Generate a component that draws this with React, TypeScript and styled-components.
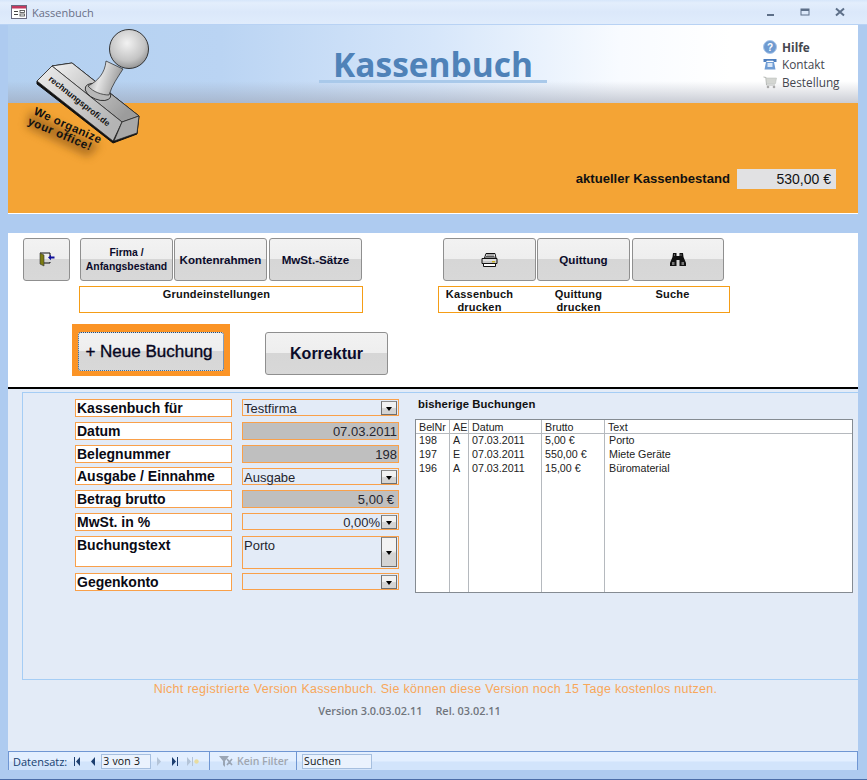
import React from "react";
import styled, { createGlobalStyle } from "styled-components";

const GlobalStyle = createGlobalStyle`
  html, body {
    margin: 0;
    padding: 0;
    background: #aecbf0;
  }
  body {
    font-family: "Liberation Sans", Arial, sans-serif;
  }
`;

const Window = styled.div`
  width: 867px;
  height: 780px;
  display: flex;
  flex-direction: column;
  overflow: hidden;
  background: #aecbf0;
`;

const TitleBar = styled.div`
  height: 25px;
  flex: none;
  display: flex;
  align-items: center;
  padding: 0 22px 0 11px;
  box-sizing: border-box;
  background: linear-gradient(#d6e6fa 0, #e3eefc 12%, #dbe8fa 50%, #e0ecfc 100%);
  border-bottom: 1px solid #b8d2f4;
`;

const TitleText = styled.span`
  font-family: "Open Sans", sans-serif;
  font-size: 11px;
  color: #6a6f86;
  margin-left: 5px;
`;

const WindowButtons = styled.div`
  margin-left: auto;
  display: flex;
  gap: 25px;
  align-items: center;
`;

const Content = styled.div`
  flex: 1;
  display: flex;
  flex-direction: column;
  margin: 0 9px 0 8px;
  min-height: 0;
`;

const Header = styled.header`
  position: relative;
  height: 188px;
  flex: none;
  display: flex;
  flex-direction: column;
  border-bottom: 1px solid #ffffff;
`;

const HeaderSky = styled.div`
  height: 78px;
  flex: none;
  display: flex;
  justify-content: center;
  background:
    linear-gradient(rgba(170, 170, 175, 0) 72%, rgba(150, 155, 170, 0.5) 100%),
    linear-gradient(90deg, #b3d0f0 0, #bad4f3 25%, #d6e6fa 50%, #f8fbff 72%, #ffffff 85%);
`;

const LogoTitle = styled.div`
  margin-top: 19px;
  box-sizing: border-box;
  width: 228px;
  height: 39px;
  padding-left: 14px;
  font-family: "Open Sans", sans-serif;
  font-size: 33.5px;
  line-height: 40px;
  font-weight: 700;
  white-space: nowrap;
  color: #4f82b8;
  border-bottom: 3px solid #a9c9ea;
`;

const HeaderOrange = styled.div`
  flex: 1;
  display: flex;
  justify-content: flex-end;
  align-items: flex-end;
  padding: 0 22px 24px 0;
  background: #f4a435;
`;

const BalanceLabel = styled.span`
  font-size: 13.1px;
  font-weight: 700;
  color: #111;
  line-height: 20px;
  margin-right: 7px;
`;

const BalanceValue = styled.span`
  width: 99px;
  height: 20px;
  box-sizing: border-box;
  padding-right: 5px;
  font-size: 14px;
  line-height: 20px;
  text-align: right;
  color: #111;
  background: #e1e1e3;
`;

const Links = styled.nav`
  position: absolute;
  top: 13px;
  right: 8px;
  width: 87px;
  display: flex;
  flex-direction: column;
`;

const LinkRow = styled.div<{ $bold?: boolean }>`
  display: flex;
  align-items: center;
  gap: 5px;
  height: 17.5px;
  font-family: "Open Sans", sans-serif;
  font-size: 11.8px;
  font-weight: ${(p) => (p.$bold ? 700 : 400)};
  color: #44464e;
  white-space: nowrap;
`;

const LinkIcon = styled.svg`
  width: 14px;
  height: 14px;
  flex: none;
`;

const Stamp = styled.svg`
  position: absolute;
  left: 12px;
  top: 4px;
  width: 130px;
  height: 130px;
  overflow: visible;
  z-index: 2;
`;

const StampPrint = styled.text<{ $spacing?: number }>`
  font-family: "Liberation Sans", sans-serif;
  font-weight: 700;
  fill: #111;
  letter-spacing: ${(p) => p.$spacing ?? 0}px;
`;

const Toolbar = styled.section`
  background: #ffffff;
  height: 156px;
  margin-top: 19px;
  flex: none;
  box-sizing: border-box;
  border-bottom: 2px solid #000;
  display: grid;
  grid-template-columns: 56px 284px 75px 292px;
  grid-template-rows: 43px 27px 1fr;
  padding: 5px 0 0 15px;
  row-gap: 5px;
`;

const ExitSlot = styled.div`
  grid-column: 1;
  grid-row: 1;
`;

const ButtonRow = styled.div<{ $col: number; $inset: number }>`
  grid-column: ${(p) => p.$col};
  grid-row: 1;
  display: flex;
  gap: 1px;
  padding-left: ${(p) => p.$inset}px;
`;

const Btn = styled.button<{ $w: number; $size?: number; $after?: number }>`
  width: ${(p) => p.$w}px;
  height: 43px;
  flex: none;
  padding: 0;
  margin-right: ${(p) => p.$after ?? 0}px;
  box-sizing: border-box;
  border: 1px solid #8f8f8f;
  border-radius: 3px;
  background: linear-gradient(#f2f2f2 0, #eeeeee 48%, #d6d6d6 50%, #d8d8d8 100%);
  font-family: "Liberation Sans", sans-serif;
  font-weight: 700;
  font-size: ${(p) => p.$size ?? 11.6}px;
  line-height: 14px;
  color: #0b0b2a;
  display: flex;
  align-items: center;
  justify-content: center;
  text-align: center;
`;

const CaptionBox = styled.div<{ $col: number }>`
  grid-column: ${(p) => p.$col};
  grid-row: 2;
  box-sizing: border-box;
  border: 1px solid #f59d16;
  font-size: 11px;
  font-weight: 700;
  line-height: 13px;
  color: #111;
  letter-spacing: 0.2px;
  padding-top: 1px;
`;

const GrundCaption = styled(CaptionBox)`
  text-align: center;
  padding-right: 9px;
`;

const DruckCaption = styled(CaptionBox)`
  display: grid;
  grid-template-columns: 81px 117px 71px;
  text-align: center;
`;

const BigRow = styled.div`
  grid-column: 1 / 5;
  grid-row: 3;
  display: flex;
  align-items: flex-start;
  padding-left: 49px;
  margin-top: 6px;
`;

const FocusFrame = styled.div`
  width: 158px;
  height: 52px;
  box-sizing: border-box;
  background: #fb9426;
  padding: 8px 6px;
`;

const NewBtn = styled(Btn)`
  width: 146px;
  height: 39px;
  padding-right: 4px;
  border: 1px dotted #1c4f86;
  font-size: 17px;
  font-weight: 400;
  color: #050520;
  -webkit-text-stroke: 0.35px #050520;
`;

const FixBtn = styled(Btn)`
  margin: 8px 0 0 35px;
  width: 123px;
  height: 43px;
  font-size: 16px;
`;

const FormArea = styled.div`
  flex: 1;
  min-height: 0;
  background: #e3ebf7;
  display: flex;
  flex-direction: column;
  padding: 3px 0 0 14px;
`;

const DetailPanel = styled.section`
  height: 288px;
  flex: none;
  box-sizing: border-box;
  border: 1px solid #a5cdf5;
  border-right: none;
  display: grid;
  grid-template-columns: 340px 1fr;
  padding: 6px 0 0 52px;
`;

const Fields = styled.div`
  display: grid;
  grid-template-columns: 157px 157px;
  column-gap: 10px;
  grid-auto-rows: min-content;
  align-content: start;
`;

const FieldLabel = styled.div<{ $h?: number; $mb?: number }>`
  height: ${(p) => p.$h ?? 18}px;
  margin-bottom: ${(p) => p.$mb ?? 5}px;
  box-sizing: border-box;
  border: 1px solid #f9a04a;
  background: #ffffff;
  padding: 1px 0 0 1px;
  font-size: 14px;
  font-weight: 700;
  line-height: 15px;
  color: #0a0a14;
`;

const FieldValue = styled.div<{ $h?: number; $top?: number; $locked?: boolean; $right?: boolean }>`
  height: ${(p) => p.$h ?? 18}px;
  margin-top: ${(p) => p.$top ?? 0}px;
  box-sizing: border-box;
  border: 1px solid #f9a04a;
  background: ${(p) => (p.$locked ? "#bfbfbf" : "#e3ebf7")};
  display: flex;
  justify-content: ${(p) => (p.$right ? "flex-end" : "flex-start")};
  align-items: flex-start;
  padding: 0 1px 0 1px;
  font-size: 13px;
  line-height: 18px;
  color: #25252d;
`;

const ValueText = styled.span<{ $pad?: number }>`
  flex: 1;
  text-align: ${(p) => (p.$pad !== undefined ? "right" : "left")};
  padding-right: ${(p) => p.$pad ?? 0}px;
`;

const DropButton = styled.span<{ $tall?: boolean }>`
  width: 16px;
  height: ${(p) => (p.$tall ? "30px" : "14px")};
  flex: none;
  margin: ${(p) => (p.$tall ? "0" : "1px 0 0")};
  box-sizing: border-box;
  border: 1px solid #6f6f6f;
  border-top-color: #8a8a8a;
  background: linear-gradient(#f2f2f2 0, #f2f2f2 45%, #d4d4d4 55%);
  display: flex;
  align-items: center;
  justify-content: center;

  &::after {
    content: "";
    border-left: 3.5px solid transparent;
    border-right: 3.5px solid transparent;
    border-top: 4px solid #000;
    margin-top: 2px;
  }
`;

const ListColumn = styled.div`
  display: flex;
  flex-direction: column;
`;

const ListTitle = styled.div`
  font-size: 11.3px;
  font-weight: 700;
  color: #111;
  line-height: 13px;
  margin: -1px 0 8px 3px;
  letter-spacing: 0.1px;
`;

const ListBox = styled.div`
  width: 438px;
  height: 174px;
  box-sizing: border-box;
  border: 1px solid #858b92;
  background: #fff;
  display: grid;
  grid-template-columns: 34px 19px 73px 63px 1fr;
  grid-template-rows: 14px 1fr;
`;

const ListHead = styled.div`
  border-bottom: 1px solid #b5b9be;
  border-right: 1px solid #b5b9be;
  padding-left: 3px;
  font-size: 10.7px;
  line-height: 14px;
  color: #222;
  white-space: nowrap;

  &:nth-child(5) {
    border-right: none;
  }
`;

const ListCol = styled.div`
  border-right: 1px solid #b5b9be;
  padding: 0 0 0 3px;
  font-size: 10.7px;
  line-height: 14px;
  color: #222;
  white-space: nowrap;

  & > div {
    position: relative;
    top: -1px;
  }

  &:last-child {
    border-right: none;
    padding-left: 4px;
  }
`;

const Notice = styled.div`
  margin-top: 2px;
  padding-right: 9px;
  text-align: center;
  font-size: 12.5px;
  line-height: 15px;
  letter-spacing: 0.3px;
  color: #f8a75a;
`;

const VersionLine = styled.div`
  margin-top: 7px;
  padding-right: 61px;
  font-family: "Open Sans", sans-serif;
  font-size: 10.9px;
  font-weight: 600;
  line-height: 13px;
  color: #70757d;
  display: flex;
  justify-content: center;
  gap: 13px;
`;

const StatusBar = styled.footer`
  margin-top: auto;
  margin-left: -14px;
  height: 19px;
  flex: none;
  display: flex;
  align-items: center;
  box-sizing: border-box;
  border-top: 1px solid #6f96d3;
  border-left: 1px solid #6f96d3;
  border-right: 1px solid #6f96d3;
  background: linear-gradient(#e3efff 0, #e3efff 50%, #d2e4fb 55%, #d2e4fb 100%);
  font-family: "Open Sans", sans-serif;
  font-size: 11px;
  color: #15406f;
`;

const StatusCell = styled.div<{ $w: number }>`
  width: ${(p) => p.$w}px;
  height: 100%;
  flex: none;
  box-sizing: border-box;
  display: flex;
  align-items: center;
  border-right: 1px solid #6f96d3;
`;

const SearchCell = styled.div`
  flex: 1;
  height: 100%;
  display: flex;
  align-items: center;
  padding-left: 5px;
`;

const RecordLabel = styled.span`
  margin-left: 4px;
  margin-right: 2px;
`;

const NavIcon = styled.svg<{ $wide?: boolean }>`
  width: ${(p) => (p.$wide ? 12 : 8)}px;
  height: 9px;
  flex: none;
  margin: 0 4px;
`;

const RecordInput = styled.span<{ $w: number }>`
  width: ${(p) => p.$w}px;
  height: 15px;
  box-sizing: border-box;
  border: 1px solid #a6bfdf;
  background: #eaf2fd;
  color: #111;
  padding-left: 1px;
  line-height: 13px;
  font-size: 10.5px;
  letter-spacing: 0.2px;
`;

const FilterIcon = styled.svg`
  width: 16px;
  height: 13px;
  flex: none;
  margin-left: 8px;
`;

const FilterText = styled.span`
  margin-left: 3px;
  font-size: 10.5px;
  color: #9fa6b0;
  font-weight: 600;
`;

const BottomStrip = styled.div`
  height: 10px;
  flex: none;
  box-sizing: border-box;
  margin: 0 -9px 0 -22px;
  background: #aecbf0;
  border-bottom: 1px solid #4c6ea8;
`;

const listRows = [
  ["198", "A", "07.03.2011", "5,00 €", "Porto"],
  ["197", "E", "07.03.2011", "550,00 €", "Miete Geräte"],
  ["196", "A", "07.03.2011", "15,00 €", "Büromaterial"],
];

const listHeads = ["BelNr", "AE", "Datum", "Brutto", "Text"];

// drawn in page coordinates, so the viewBox starts at the stamp's place on the page
const StampDrawing = () => (
  <Stamp viewBox="20 30 130 130">
    <defs>
      <radialGradient id="knob" cx="45%" cy="35%" r="70%">
        <stop offset="0%" stopColor="#f2f2f2" />
        <stop offset="65%" stopColor="#c4c4c4" />
        <stop offset="100%" stopColor="#8a8a8a" />
      </radialGradient>
      <linearGradient id="neck" x1="0" x2="1" y1="0" y2="0.3">
        <stop offset="0%" stopColor="#8f8f8f" />
        <stop offset="45%" stopColor="#e4e4e4" />
        <stop offset="100%" stopColor="#9a9a9a" />
      </linearGradient>
      <linearGradient id="front" x1="0" x2="1" y1="0" y2="0.6">
        <stop offset="0%" stopColor="#ececec" />
        <stop offset="100%" stopColor="#b4b4b4" />
      </linearGradient>
      <linearGradient id="back" x1="0" x2="1" y1="0" y2="0.6">
        <stop offset="0%" stopColor="#f2f2f2" />
        <stop offset="100%" stopColor="#9c9c9c" />
      </linearGradient>
      <filter id="soft" x="-30%" y="-50%" width="160%" height="200%">
        <feGaussianBlur stdDeviation="4" />
      </filter>
    </defs>
    <path d="M26 128 L30 112 L100 146 L88 158 Z" fill="#8a5518" opacity="0.6" filter="url(#soft)" />
    <path d="M37 82 L52 67 L72 64 L139 117 L137 135 L113 144 L37 85 Z" fill="#111" stroke="#111" strokeWidth="1" />
    <path d="M52 67 L72 64 L139 117 L122 123 Z" fill="url(#back)" stroke="#222" strokeWidth="0.7" />
    <path d="M37 82 L52 67 L122 123 L113 142 Z" fill="url(#front)" stroke="#222" strokeWidth="0.7" />
    <path d="M122 123 L139 117 L137 134 L114 142 Z" fill="#a8a8a8" stroke="#222" strokeWidth="0.7" />
    <ellipse cx="98" cy="93" rx="13.5" ry="7.5" transform="rotate(22 98 93)" fill="#b8b8b8" stroke="#222" strokeWidth="0.8" />
    <path d="M88 87 C98 82 105 74 106 62 L123 70 C118 78 112 86 109 96 C102 96 93 93 88 87 Z" fill="url(#neck)" stroke="#222" strokeWidth="0.7" />
    <circle cx="129" cy="50" r="19.5" fill="url(#knob)" stroke="#222" strokeWidth="0.9" />
    <StampPrint fontSize="8.6" transform="translate(48 81) rotate(38.3)">rechnungsprofi.de</StampPrint>
    <StampPrint fontSize="11.5" $spacing={0.5} transform="translate(33 115) rotate(24)">We organize</StampPrint>
    <StampPrint fontSize="11.5" $spacing={0.5} transform="translate(27 125) rotate(23)">your office!</StampPrint>
  </Stamp>
);

const First = () => (
  <NavIcon viewBox="0 0 8 9">
    <path d="M1 0h1v9H1z M7 0v9L3 4.5z" fill="#1d3f70" />
  </NavIcon>
);
const Prev = () => (
  <NavIcon viewBox="0 0 8 9">
    <path d="M6 0v9L2 4.5z" fill="#1d3f70" />
  </NavIcon>
);
const Next = () => (
  <NavIcon viewBox="0 0 8 9">
    <path d="M2 0v9l4-4.5z" fill="#b4c4d8" />
  </NavIcon>
);
const Last = () => (
  <NavIcon viewBox="0 0 8 9">
    <path d="M1 0v9l4-4.5z M6 0h1v9H6z" fill="#1d3f70" />
  </NavIcon>
);
const NewRec = () => (
  <NavIcon $wide viewBox="0 0 12 9">
    <path d="M0 0v9l4-4.5z M5 0h1v9H5z" fill="#b4c4d8" />
    <circle cx="9.5" cy="4.5" r="2.2" fill="#e8dca0" />
  </NavIcon>
);

export default function App() {
  return (
    <>
      <GlobalStyle />
      <Window>
        <TitleBar>
          <svg width="16" height="14" viewBox="0 0 16 14">
            <rect x="0.5" y="0.5" width="15" height="13" fill="#fff" stroke="#6a6a80" />
            <rect x="1" y="1" width="14" height="2.5" fill="#c2395f" />
            <path d="M3 6h4v1H3z M3 9h4v1H3z" fill="#444" />
            <rect x="9" y="5.5" width="4.5" height="2" fill="none" stroke="#444" strokeWidth="0.8" />
            <rect x="9" y="9" width="4.5" height="2" fill="none" stroke="#444" strokeWidth="0.8" />
          </svg>
          <TitleText>Kassenbuch</TitleText>
          <WindowButtons>
            <svg width="9" height="10" viewBox="0 0 9 10">
              <rect x="1" y="7" width="7" height="2" fill="#5d6f88" />
            </svg>
            <svg width="10" height="10" viewBox="0 0 10 10">
              <rect x="1" y="2" width="8" height="6" fill="none" stroke="#5d6f88" />
              <rect x="1" y="2" width="8" height="2" fill="#5d6f88" />
            </svg>
            <svg width="10" height="10" viewBox="0 0 10 10">
              <path d="M1 1.5 L9 8.5 M9 1.5 L1 8.5" stroke="#5d6f88" strokeWidth="2" />
            </svg>
          </WindowButtons>
        </TitleBar>
        <Content>
          <Header>
            <HeaderSky>
              <LogoTitle>Kassenbuch</LogoTitle>
            </HeaderSky>
            <HeaderOrange>
              <BalanceLabel>aktueller Kassenbestand</BalanceLabel>
              <BalanceValue>530,00 €</BalanceValue>
            </HeaderOrange>
            <StampDrawing />
            <Links>
              <LinkRow $bold>
                <LinkIcon viewBox="0 0 14 14">
                  <circle cx="7" cy="7" r="6.5" fill="#6e9ad0" stroke="#a9c6ea" />
                  <text x="7" y="10.5" textAnchor="middle" fontSize="10" fontWeight="700" fill="#fff" fontFamily="Liberation Sans">?</text>
                </LinkIcon>
                Hilfe
              </LinkRow>
              <LinkRow>
                <LinkIcon viewBox="0 0 14 14">
                  <path d="M0.5 2 H13.5 V5 H11 L10 3.8 H4 L3 5 H0.5 Z" fill="#4f7fbe" />
                  <path d="M3 5 H11 L12.5 12.5 H1.5 Z" fill="#6f9cd4" />
                  <rect x="4.5" y="6" width="5" height="4" fill="#dbe8f8" />
                </LinkIcon>
                Kontakt
              </LinkRow>
              <LinkRow>
                <LinkIcon viewBox="0 0 14 14">
                  <path d="M0.5 2 L3 2.5 L3.5 10 H12" fill="none" stroke="#b5b8b5" strokeWidth="1" />
                  <path d="M3 3 H13.5 L12.5 8.5 H3.5 Z" fill="#d4d6d2" stroke="#b5b8b5" strokeWidth="0.5" />
                  <circle cx="5" cy="12" r="1.3" fill="#aaa" />
                  <circle cx="11" cy="12" r="1.3" fill="#aaa" />
                </LinkIcon>
                Bestellung
              </LinkRow>
            </Links>
          </Header>
          <Toolbar>
            <ExitSlot>
              <Btn $w={47}>
                <svg width="16" height="15" viewBox="0 0 16 15">
                  <path d="M1 1H11V4 M11 10V11H5" fill="none" stroke="#111" />
                  <path d="M1 1L5 3V14L1 12Z" fill="#7d7d12" stroke="#333" strokeWidth="0.6" />
                  <path d="M9 5.5L12 2.8V4.5H15.5V6.5H12V8.2Z" fill="#10109a" />
                </svg>
              </Btn>
            </ExitSlot>
            <ButtonRow $col={2} $inset={1}>
              <Btn $w={93} $size={10.4}>
                Firma /<br />
                Anfangsbestand
              </Btn>
              <Btn $w={93} $after={1}>Kontenrahmen</Btn>
              <Btn $w={93}>MwSt.-Sätze</Btn>
            </ButtonRow>
            <ButtonRow $col={4} $inset={5}>
              <Btn $w={93}>
                <svg width="17" height="14" viewBox="0 0 17 14">
                  <path d="M5 0.5H14L15 5H3.5Z" fill="#fff" stroke="#111" />
                  <path d="M5.5 2H13M5 3.5H13.5" stroke="#111" strokeWidth="0.7" />
                  <path d="M1 5.5H16V10.5H1Z" fill="#c8c8c8" stroke="#111" />
                  <path d="M2 7H15" stroke="#fff" strokeWidth="0.8" />
                  <path d="M2.5 10.5H14.5V13.5H2.5Z" fill="#fff" stroke="#111" />
                  <rect x="11" y="8" width="3" height="1.4" fill="#c8b020" />
                </svg>
              </Btn>
              <Btn $w={93} $after={1}>Quittung</Btn>
              <Btn $w={92}>
                <svg width="16" height="13" viewBox="0 0 16 13">
                  <path d="M3 0H6.5V3H9.5V0H13L13.5 4L16 10V13H9.5V7H6.5V13H0V10L2.5 4Z" fill="#111" />
                  <rect x="2" y="9" width="2.5" height="3" fill="#777" />
                  <rect x="11.5" y="9" width="2.5" height="3" fill="#777" />
                  <rect x="4" y="1" width="1" height="2" fill="#666" />
                  <rect x="10.5" y="1" width="1" height="2" fill="#666" />
                </svg>
              </Btn>
            </ButtonRow>
            <GrundCaption $col={2}>Grundeinstellungen</GrundCaption>
            <DruckCaption $col={4}>
              <span>Kassenbuch<br />drucken</span>
              <span>Quittung<br />drucken</span>
              <span>Suche</span>
            </DruckCaption>
            <BigRow>
              <FocusFrame>
                <NewBtn $w={146}>+ Neue Buchung</NewBtn>
              </FocusFrame>
              <FixBtn $w={123}>Korrektur</FixBtn>
            </BigRow>
          </Toolbar>
          <FormArea>
            <DetailPanel>
              <Fields>
                <FieldLabel>Kassenbuch für</FieldLabel>
                <FieldValue $h={17}>
                  <ValueText>Testfirma</ValueText>
                  <DropButton />
                </FieldValue>
                <FieldLabel>Datum</FieldLabel>
                <FieldValue $locked $right>07.03.2011</FieldValue>
                <FieldLabel $mb={4}>Belegnummer</FieldLabel>
                <FieldValue $locked $right>198</FieldValue>
                <FieldLabel>Ausgabe / Einnahme</FieldLabel>
                <FieldValue $h={17} $top={1}>
                  <ValueText>Ausgabe</ValueText>
                  <DropButton />
                </FieldValue>
                <FieldLabel>Betrag brutto</FieldLabel>
                <FieldValue $locked $right>
                  <ValueText $pad={3}>5,00 €</ValueText>
                </FieldValue>
                <FieldLabel>MwSt. in %</FieldLabel>
                <FieldValue $h={17}>
                  <ValueText $pad={1}>0,00%</ValueText>
                  <DropButton />
                </FieldValue>
                <FieldLabel $h={31} $mb={6}>Buchungstext</FieldLabel>
                <FieldValue $h={33}>
                  <ValueText>Porto</ValueText>
                  <DropButton $tall />
                </FieldValue>
                <FieldLabel>Gegenkonto</FieldLabel>
                <FieldValue $h={17}>
                  <ValueText />
                  <DropButton />
                </FieldValue>
              </Fields>
              <ListColumn>
                <ListTitle>bisherige Buchungen</ListTitle>
                <ListBox>
                  {listHeads.map((h) => (
                    <ListHead key={h}>{h}</ListHead>
                  ))}
                  {listHeads.map((h, col) => (
                    <ListCol key={h}>
                      {listRows.map((r) => (
                        <div key={r[0]}>{r[col]}</div>
                      ))}
                    </ListCol>
                  ))}
                </ListBox>
              </ListColumn>
            </DetailPanel>
            <Notice>Nicht registrierte Version Kassenbuch. Sie können diese Version noch 15 Tage kostenlos nutzen.</Notice>
            <VersionLine>
              <span>Version 3.0.03.02.11</span>
              <span>Rel. 03.02.11</span>
            </VersionLine>
            <StatusBar>
              <StatusCell $w={201}>
                <RecordLabel>Datensatz:</RecordLabel>
                <First />
                <Prev />
                <RecordInput $w={50}>3 von 3</RecordInput>
                <Next />
                <Last />
                <NewRec />
              </StatusCell>
              <StatusCell $w={87}>
                <FilterIcon viewBox="0 0 16 13">
                  <path d="M1 1h10L7 6v6L5 10V6z" fill="#9aa5b4" />
                  <path d="M9 4l5 6M14 4l-5 6" stroke="#9aa5b4" strokeWidth="1.6" />
                </FilterIcon>
                <FilterText>Kein Filter</FilterText>
              </StatusCell>
              <SearchCell>
                <RecordInput $w={70}>Suchen</RecordInput>
              </SearchCell>
            </StatusBar>
            <BottomStrip />
          </FormArea>
        </Content>
      </Window>
    </>
  );
}
